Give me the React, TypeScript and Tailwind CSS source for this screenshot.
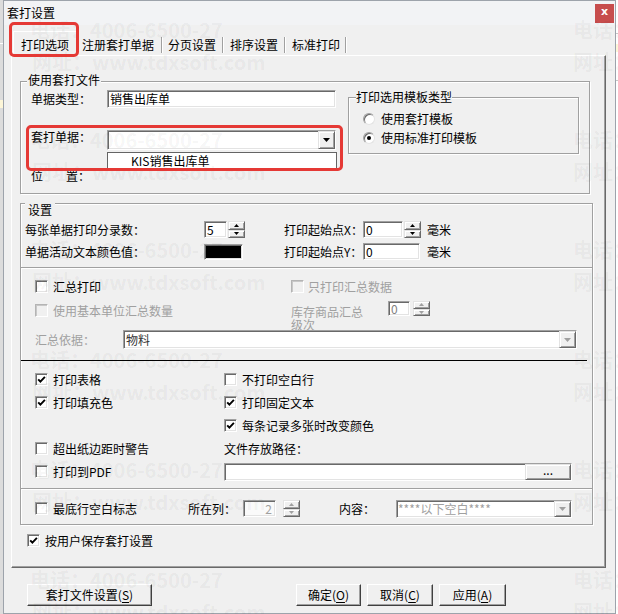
import React from "react";

const SUNKEN =
  "border border-t-[#a0a0a0] border-l-[#a0a0a0] border-r-white border-b-white shadow-[inset_1px_1px_0_#696969,inset_-1px_-1px_0_#e3e3e3]";
const RAISED =
  "border border-t-[#e3e3e3] border-l-[#e3e3e3] border-r-[#696969] border-b-[#696969] shadow-[inset_1px_1px_0_#ffffff,inset_-1px_-1px_0_#a0a0a0]";

function Check({ checked = false, disabled = false }: { checked?: boolean; disabled?: boolean }) {
  return (
    <span
      className={`flex h-[13px] w-[13px] shrink-0 items-center justify-center ${
        disabled
          ? "border border-t-[#b4b4b4] border-l-[#b4b4b4] border-r-white border-b-white bg-[#f0f0f0] shadow-[inset_1px_1px_0_#c8c8c8]"
          : `${SUNKEN} bg-white`
      }`}
    >
      {checked && (
        <svg width="9" height="9" viewBox="0 0 9 9">
          <path d="M1.2 4.3 L3.4 6.7 L7.9 1.9" fill="none" stroke="#000" strokeWidth="1.9" />
        </svg>
      )}
    </span>
  );
}

function Radio({ checked = false }: { checked?: boolean }) {
  return (
    <span className="flex h-[12px] w-[12px] shrink-0 items-center justify-center rounded-full border border-t-[#a0a0a0] border-l-[#a0a0a0] border-r-[#e3e3e3] border-b-[#e3e3e3] bg-white shadow-[inset_1px_1px_0_#696969]">
      {checked && <span className="h-[4px] w-[4px] rounded-full bg-black" />}
    </span>
  );
}

function Spin({ disabled = false, h = "h-[17px]" }: { disabled?: boolean; h?: string }) {
  const c = disabled ? "#a0a0a0" : "#000";
  return (
    <div className={`flex w-[17px] shrink-0 flex-col ${h}`}>
      <div className={`flex flex-1 items-center justify-center bg-[#f0f0f0] ${RAISED}`}>
        <svg width="5" height="3" viewBox="0 0 5 3">
          <path d="M2.5 0 L5 3 L0 3 Z" fill={c} />
        </svg>
      </div>
      <div className={`flex flex-1 items-center justify-center bg-[#f0f0f0] ${RAISED}`}>
        <svg width="5" height="3" viewBox="0 0 5 3">
          <path d="M0 0 L5 0 L2.5 3 Z" fill={c} />
        </svg>
      </div>
    </div>
  );
}

function DropBtn({ disabled = false }: { disabled?: boolean }) {
  return (
    <div className={`flex h-full w-[17px] shrink-0 items-center justify-center bg-[#f0f0f0] ${RAISED}`}>
      <svg width="7" height="4" viewBox="0 0 7 4">
        <path d="M0 0 L7 0 L3.5 4 Z" fill={disabled ? "#a0a0a0" : "#000"} />
      </svg>
    </div>
  );
}

function Btn({ w, label, k }: { w: string; label: string; k: string }) {
  return (
    <div
      className={`flex h-[22px] ${w} items-center justify-center border border-t-white border-l-white border-r-[#404040] border-b-[#404040] bg-[#f0f0f0] shadow-[inset_-1px_-1px_0_#a0a0a0]`}
    >
      {label}(<span className="underline underline-offset-2">{k}</span>)
    </div>
  );
}

function Sep({ ml }: { ml: string }) {
  return <span className={`${ml} h-[16px] w-[2px] border-l border-l-[#a0a0a0] border-r border-r-white`} />;
}

const GROUP = "border border-[#a0a0a0] shadow-[inset_1px_1px_0_#ffffff,1px_1px_0_#ffffff]";

export default function App() {
  const rows = [0, 1, 2, 3, 4, 5];
  return (
    <div className="relative flex h-[614px] w-[618px] overflow-hidden bg-[#e9e9e9] font-['Noto_Sans_CJK_SC',sans-serif] text-[12px] leading-[14px] text-black">
      {/* background window (left) */}
      <div className="flex w-[3px] shrink-0 flex-col bg-[#dcdcdc]">
        <div className="mt-[43px] h-px bg-white" />
        <div className="mt-[56px] h-[8px] bg-[#fdf6d8]" />
      </div>

      {/* dialog */}
      <div className="flex h-[614px] w-[613px] shrink-0 flex-col border border-[#9da3ab] bg-[#f0f0f0]">
        {/* title bar */}
        <div className="flex h-[24px] shrink-0 items-center justify-between bg-[#f2f3f5] pl-[3px] pr-[1px]">
          <span>套打设置</span>
          <div className="flex h-[19px] w-[19px] items-center justify-center bg-[#c74d4d] pb-[2px] font-['DejaVu_Sans',sans-serif] text-[11px] font-bold text-white">
            x
          </div>
        </div>

        {/* tabs */}
        <div className="flex h-[30px] shrink-0 items-end pl-[9px]">
          <div className="relative z-10 -mb-px flex h-[25px] w-[64px] items-center justify-center border-t border-l border-r border-t-white border-l-white border-r-[#696969] bg-[#f0f0f0] pt-[2px]">
            打印选项
          </div>
          <div className="mb-px ml-[5px] flex h-[18px] items-center">
            <span>注册套打单据</span>
            <Sep ml="ml-[7px]" />
            <span className="ml-[5px]">分页设置</span>
            <Sep ml="ml-[6px]" />
            <span className="ml-[6px]">排序设置</span>
            <Sep ml="ml-[6px]" />
            <span className="ml-[6px]">标准打印</span>
            <Sep ml="ml-[5px]" />
          </div>
        </div>

        {/* tab panel */}
        <div className="ml-[7px] flex h-[513px] w-[595px] shrink-0 flex-col border border-t-white border-l-white border-r-[#696969] border-b-[#696969] shadow-[inset_-1px_-1px_0_#a0a0a0]">
          {/* group 1 */}
          <div className={`ml-[8px] mt-[25px] flex h-[113px] w-[570px] flex-col ${GROUP}`}>
            <span className="-mt-[9px] ml-[6px] h-[14px] self-start bg-[#f0f0f0] px-[1px]">使用套打文件</span>
            <div className="flex">
              <div className="flex w-[322px] flex-col pl-[10px]">
                <div className="mt-[3px] flex h-[18px] items-center">
                  <span className="w-[76px]">单据类型：</span>
                  <div className={`flex h-[18px] w-[229px] items-center bg-white pl-[2px] ${SUNKEN}`}>销售出库单</div>
                </div>
                <div className="mt-[22px] flex h-[20px] items-start">
                  <span className="w-[76px]">套打单据：</span>
                  <div className={`relative flex h-[20px] w-[229px] justify-end bg-white ${SUNKEN}`}>
                    <DropBtn />
                    <div className="absolute left-[-1px] top-[21px] z-10 flex h-[17px] w-[230px] items-center border border-[#646464] bg-white pl-[23px]">
                      KIS销售出库单
                    </div>
                  </div>
                </div>
                <div className="mt-[19px] flex h-[14px]">
                  <span>位</span>
                  <span className="ml-[23px]">置：</span>
                </div>
              </div>
              <div className={`ml-[5px] mt-[10px] flex h-[57px] w-[231px] flex-col ${GROUP}`}>
                <span className="-mt-[8px] ml-[7px] h-[14px] self-start bg-[#f0f0f0]">打印选用模板类型</span>
                <div className="mt-[8px] flex h-[14px] items-center pl-[14px]">
                  <Radio />
                  <span className="ml-[6px]">使用套打模板</span>
                </div>
                <div className="mt-[5px] flex h-[14px] items-center pl-[14px]">
                  <Radio checked />
                  <span className="ml-[6px]">使用标准打印模板</span>
                </div>
              </div>
            </div>
          </div>

          {/* group 2 */}
          <div className={`ml-[8px] mt-[9px] flex h-[322px] w-[573px] flex-col ${GROUP}`}>
            <span className="-mt-[2px] ml-[4px] h-[16px] self-start bg-[#f0f0f0] px-[3px] pt-[1px]">设置</span>

            <div className="mt-[3px] flex h-[17px] items-center pl-[4px]">
              <span className="w-[179px]">每张单据打印分录数：</span>
              <div className={`flex h-[17px] w-[23px] items-center bg-white pl-[2px] ${SUNKEN}`}>5</div>
              <div className="ml-[1px]">
                <Spin />
              </div>
              <span className="ml-[39px] w-[79px]">打印起始点X：</span>
              <div className={`flex h-[17px] w-[40px] items-center bg-white pl-[2px] ${SUNKEN}`}>0</div>
              <div className="ml-[1px]">
                <Spin />
              </div>
              <span className="ml-[6px]">毫米</span>
            </div>

            <div className="mt-[5px] flex h-[17px] items-center pl-[4px]">
              <span className="w-[179px]">单据活动文本颜色值：</span>
              <div className={`h-[16px] w-[39px] bg-black ${SUNKEN}`} />
              <span className="ml-[41px] w-[79px]">打印起始点Y：</span>
              <div className={`flex h-[17px] w-[57px] items-center border-r-[#404040] bg-white pl-[2px] ${SUNKEN}`}>0</div>
              <span className="ml-[7px]">毫米</span>
            </div>

            {/* disabled summary section */}
            <div className="mt-[7px] flex flex-col border-t border-t-[#a0a0a0] shadow-[inset_0_1px_0_#ffffff]">
              <div className="mt-[12px] flex h-[13px] items-center pl-[14px]">
                <div className="flex w-[256px] items-center">
                  <Check />
                  <span className="ml-[5px]">汇总打印</span>
                </div>
                <Check disabled />
                <span className="ml-[4px] text-[#a0a0a0]">只打印汇总数据</span>
              </div>
              <div className="mt-[11px] flex h-[26px] items-start pl-[14px]">
                <div className="flex h-[13px] w-[256px] items-center">
                  <Check disabled />
                  <span className="ml-[5px] text-[#a0a0a0]">使用基本单位汇总数量</span>
                </div>
                <span className="w-[97px] pt-[1px] leading-[13px] text-[#a0a0a0]">
                  库存商品汇总
                  <br />
                  级次
                </span>
                <div className={`-mt-[3px] flex h-[15px] w-[22px] items-center bg-white pl-[2px] text-[#808080] ${SUNKEN}`}>0</div>
                <div className="-mt-[3px] ml-[3px]">
                  <Spin disabled h="h-[15px]" />
                </div>
              </div>
              <div className="flex h-[19px] items-center pl-[14px]">
                <span className="w-[88px] text-[#a0a0a0]">汇总依据：</span>
                <div className={`flex h-[19px] w-[454px] items-center justify-between bg-white pl-[2px] ${SUNKEN}`}>
                  <span className="text-[#333]">物料</span>
                  <DropBtn disabled />
                </div>
              </div>
              <div className="mr-[5px] mt-[11px] h-px bg-black" />
            </div>

            {/* print options */}
            <div className="mt-[12px] flex h-[13px] items-center pl-[14px]">
              <div className="flex w-[189px] items-center">
                <Check checked />
                <span className="ml-[5px]">打印表格</span>
              </div>
              <Check />
              <span className="ml-[5px]">不打印空白行</span>
            </div>
            <div className="mt-[10px] flex h-[13px] items-center pl-[14px]">
              <div className="flex w-[189px] items-center">
                <Check checked />
                <span className="ml-[5px]">打印填充色</span>
              </div>
              <Check checked />
              <span className="ml-[5px]">打印固定文本</span>
            </div>
            <div className="mt-[10px] flex h-[13px] items-center pl-[14px]">
              <div className="w-[189px]" />
              <Check checked />
              <span className="ml-[5px]">每条记录多张时改变颜色</span>
            </div>
            <div className="mt-[10px] flex h-[13px] items-center pl-[14px]">
              <div className="flex w-[189px] items-center">
                <Check />
                <span className="ml-[5px]">超出纸边距时警告</span>
              </div>
              <span>文件存放路径：</span>
            </div>
            <div className="mt-[10px] flex h-[13px] items-center pl-[14px]">
              <div className="flex w-[189px] items-center">
                <Check />
                <span className="ml-[5px]">打印到PDF</span>
              </div>
              <div className={`flex h-[18px] w-[348px] shrink-0 justify-end bg-white ${SUNKEN}`}>
                <div className={`flex h-full w-[46px] items-center justify-center bg-[#f0f0f0] pb-[3px] ${RAISED}`}>...</div>
              </div>
            </div>

            <div className="mt-[10px] h-[2px] border-t border-t-[#a0a0a0] border-b border-b-white" />

            <div className="mt-[12px] flex h-[13px] items-center pl-[14px]">
              <div className="flex w-[153px] items-center">
                <Check />
                <span className="ml-[5px]">最底行空白标志</span>
              </div>
              <span className="w-[55px]">所在列：</span>
              <div className={`flex h-[17px] w-[33px] shrink-0 items-center justify-end bg-[#fafafa] pr-[3px] text-[#a0a0a0] ${SUNKEN}`}>2</div>
              <div className="ml-[7px]">
                <Spin disabled />
              </div>
              <span className="ml-[39px] w-[57px]">内容：</span>
              <div className={`flex h-[18px] w-[176px] shrink-0 items-center justify-between bg-white pl-[1px] ${SUNKEN}`}>
                <span className="text-[#a0a0a0]">****以下空白****</span>
                <DropBtn disabled />
              </div>
            </div>
          </div>

          <div className="ml-[15px] mt-[9px] flex h-[13px] items-center">
            <Check checked />
            <span className="ml-[5px]">按用户保存套打设置</span>
          </div>
        </div>

        {/* buttons */}
        <div className="mt-[16px] flex pl-[23px]">
          <Btn w="w-[125px]" label="套打文件设置" k="S" />
          <div className="ml-[144px]">
            <Btn w="w-[65px]" label="确定" k="O" />
          </div>
          <div className="ml-[6px]">
            <Btn w="w-[66px]" label="取消" k="C" />
          </div>
          <div className="ml-[6px]">
            <Btn w="w-[67px]" label="应用" k="A" />
          </div>
        </div>
      </div>

      {/* background window (right) */}
      <div className="flex flex-1 flex-col bg-white">
        <div className="mt-[33px] h-px bg-[#c8c8c8]" />
        <div className="mt-[10px] h-[8px] bg-[#fdf6d8]" />
        <div className="mt-[28px] h-px bg-[#c8c8c8]" />
      </div>

      {/* watermark overlay */}
      <div className="pointer-events-none absolute inset-0 z-20 pl-[30px] pt-[19px] text-[20px] font-bold leading-[22px] text-[rgba(0,0,0,0.05)]">
        {rows.map((i) => (
          <div key={i} className="h-[110px]">
            <div className="flex whitespace-nowrap">
              <span className="w-[543px] shrink-0">电话：4006-6500-27</span>
              <span>电话：4006-6500-27</span>
            </div>
            <div className="mt-[10px] flex whitespace-nowrap pl-[2px]">
              <span className="w-[541px] shrink-0">网址：www.tdxsoft.com</span>
              <span>网址：www.tdxsoft.com</span>
            </div>
          </div>
        ))}
      </div>

      {/* red annotation boxes */}
      <div className="pointer-events-none absolute left-[9px] top-[22px] z-30 h-[35px] w-[70px] rounded-[5px] border-[3px] border-[#e53935]" />
      <div className="pointer-events-none absolute left-[26px] top-[125px] z-30 h-[46px] w-[317px] rounded-[5px] border-[3px] border-[#e53935]" />
    </div>
  );
}
